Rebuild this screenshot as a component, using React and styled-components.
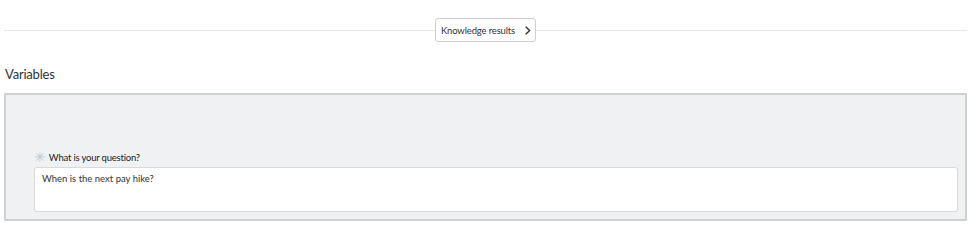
import React, { useState } from "react";
import styled, { createGlobalStyle } from "styled-components";

const GlobalStyle = createGlobalStyle`
  body {
    margin: 0;
    background: #fff;
    font-family: Lato, "Open Sans", sans-serif;
    color: #2e2e2e;
  }
`;

function App() {
  const [question, setQuestion] = useState("When is the next pay hike?");
  return (
    <Page>
      <GlobalStyle />
      <Divider>
        <ResultsButton>
          Knowledge results
          <Chevron viewBox="0 0 10 14">
            <path d="M2.5 1.5 L8 7 L2.5 12.5" />
          </Chevron>
        </ResultsButton>
      </Divider>

      <Heading>Variables</Heading>

      <Panel>
        <Field>
          <Label>
            <Required>✳</Required>
            What is your question?
          </Label>
          <Input value={question} onChange={(e) => setQuestion(e.target.value)} />
        </Field>
      </Panel>
    </Page>
  );
}

export default App;

const Page = styled.div`
  padding: 18px 8px 0 4px;
`;

const Divider = styled.div`
  display: flex;
  align-items: center;
  justify-content: center;
  height: 24px;

  &::before,
  &::after {
    content: "";
    flex: 1;
    height: 1px;
    background: #e6e6e6;
  }
`;

const ResultsButton = styled.button`
  display: flex;
  align-items: center;
  justify-content: center;
  gap: 9px;
  height: 24px;
  width: 101px;
  padding: 0 0 0 1px;
  white-space: nowrap;
  background: #fff;
  border: 1px solid #cfcfcf;
  border-radius: 3px;
  font-family: Lato, "Open Sans", sans-serif;
  font-size: 9.5px;
  letter-spacing: -0.15px;
  color: #333;
  cursor: pointer;
`;

const Chevron = styled.svg`
  width: 7px;
  height: 11px;
  fill: none;
  stroke: #333;
  stroke-width: 2;
`;

const Heading = styled.h2`
  margin: 0 0 9px;
  padding: 22px 0 0 1px;
  height: 20px;
  line-height: 20px;
  font-size: 13px;
  letter-spacing: -0.2px;
  font-weight: 400;
  color: #333;
`;

const Panel = styled.div`
  height: 128px;
  background: #f0f1f2;
  border: 2px solid #cdd1d4;
  border-radius: 1px;
  display: flex;
  align-items: flex-end;
  padding: 0 7px 7px 28px;
  box-sizing: border-box;
`;

const Field = styled.div`
  flex: 1;
  display: flex;
  flex-direction: column;
  gap: 3px;
`;

const Label = styled.label`
  display: flex;
  align-items: center;
  gap: 3px;
  font-size: 9.5px;
  letter-spacing: -0.2px;
  color: #222;
`;

const Required = styled.span`
  color: #c4c8cc;
  font-size: 14px;
  line-height: 1;
`;

const Input = styled.textarea`
  height: 45px;
  box-sizing: border-box;
  resize: none;
  border: 1px solid #d9d9d9;
  border-radius: 3px;
  background: #fff;
  padding: 5px 7px;
  font-family: Lato, "Open Sans", sans-serif;
  font-size: 9.5px;
  color: #333;
  outline: none;
`;
